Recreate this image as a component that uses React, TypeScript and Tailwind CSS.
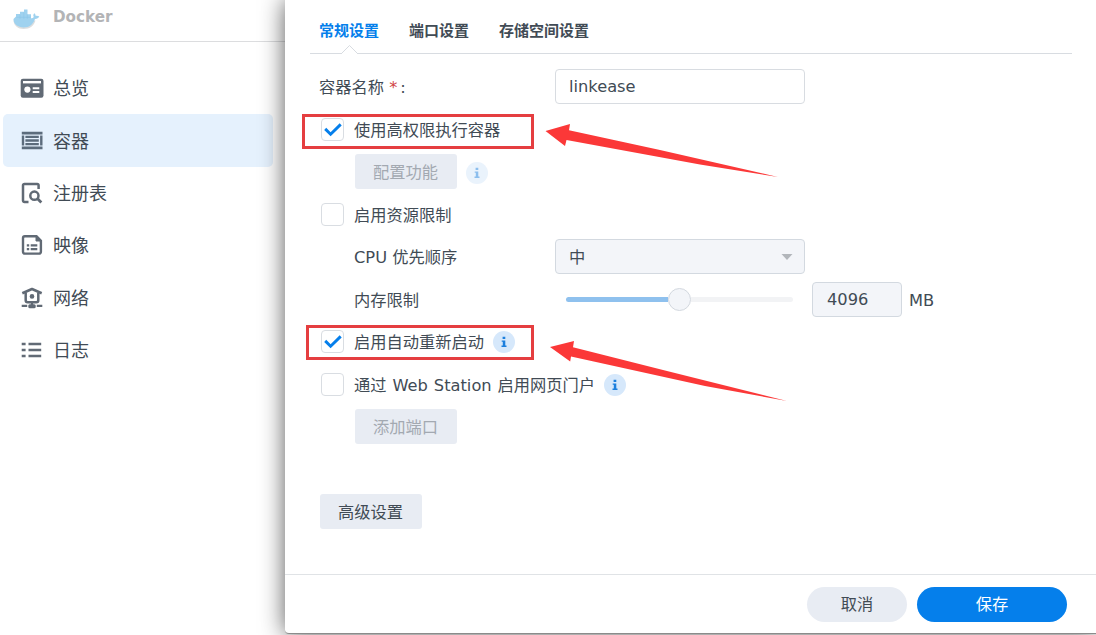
import React from 'react';

const Overview = () => (
  <svg width="24" height="22" viewBox="0 0 24 22" fill="none">
    <rect x="0.7" y="1.7" width="22.8" height="19" rx="2.2" fill="#616a75" />
    <rect x="3" y="4" width="18" height="2.4" fill="#fff" />
    <circle cx="7.4" cy="12.6" r="3.1" fill="#fff" />
    <path d="M12.7 11.2h6.6M12.7 15h6.6" stroke="#fff" strokeWidth="1.9" />
  </svg>
);

const Container = () => (
  <svg width="24" height="22" viewBox="0 0 24 22" fill="none" stroke="#5c6c7c">
    <path d="M1.8 3.2h20.7M1.8 17.8h20.7" strokeWidth="2.8" />
    <path d="M3 5.6v9.8M21.3 5.6v9.8" strokeWidth="2.4" />
    <path d="M5.4 6.8h13.4M5.4 10.5h13.4M5.400 14.200h13.400" strokeWidth="2.300" />
  </svg>
);

const Registry = () => (
  <svg width="24" height="22" viewBox="0 0 24 22" fill="none" stroke="#616a75" strokeWidth="2.5">
    <path d="M8.500 20H4.400A1.400 1.400 0 0 1 3 18.600V3.400A1.400 1.400 0 0 1 4.400 2h12.800a1.400 1.400 0 0 1 1.400 1.400V7" />
    <circle cx="14.400" cy="13.700" r="4.100" />
    <path d="m17.300 16.600 4 4" strokeWidth="2.800" />
  </svg>
);

const Image = () => (
  <svg width="24" height="22" viewBox="0 0 24 22" fill="none" stroke="#616a75">
    <path d="M16.500 2.300H4.800A1.800 1.800 0 0 0 3 4.100V17.800a1.800 1.800 0 0 0 1.800 1.800h14.300a1.800 1.800 0 0 0 1.800-1.800V6.800z" strokeWidth="2.400" />
    <path d="M16 2v5h5z" fill="#616a75" />
    <path d="M6.800 11.400h2.400M10.700 11.400h6.600M6.800 15.200h2.400M10.700 15.200h6.600" strokeWidth="2.200" />
  </svg>
);

const Network = () => (
  <svg width="24" height="22" viewBox="0 0 24 22" fill="none" stroke="#616a75">
    <path d="M2.300 6.200 12 2l9.700 4.200" strokeWidth="2.600" strokeLinejoin="round" />
    <path d="M5.700 5.800v7.400a2 2 0 0 0 2 2h8.600a2 2 0 0 0 2-2V5.800" strokeWidth="2.500" />
    <circle cx="12" cy="9.400" r="2.300" fill="#616a75" stroke="none" />
    <path d="M12 15v4M1.700 18.800h5.500M16.800 18.800h5.500" strokeWidth="2.200" />
    <rect x="8.300" y="17.300" width="7.400" height="4" rx="1.500" fill="#616a75" stroke="none" />
  </svg>
);

const Log = () => (
  <svg width="24" height="22" viewBox="0 0 24 22" fill="none" stroke="#616a75" strokeWidth="2.400">
    <path d="M1.700 5h3.900M8.500 5h12.700M1.700 11h3.900M8.500 11h12.700M1.700 17h3.900M8.500 17h12.700" />
  </svg>
);

const Whale = () => (
  <svg width="30" height="22" viewBox="0 0 30 22">
    <path d="M1.500 11.500c.500 5.500 4.500 8.500 10 8.500 6.500 0 10.500-3.500 12-8.500z" fill="#dcdedf" />
    <path d="M1.500 10 4 7.500V5h4V2.800h4V.6h3.500v4.600H19v4.100c1.300 0 2.300-.500 2.800-1.300-.800-1.200-.600-2.600.400-3.800 1 .700 1.500 1.600 1.500 2.700 1.200-.300 2.500-.100 3.600.600-.700 1.600-2.200 2.400-4.300 2.400-2 5.300-5.400 8.500-11.300 8.500-5.900 0-10-2.900-10.200-7.800z" fill="#9fd2ef" />
    <path d="M4.500 8.300h14M8 5.800v4M11.800 3.500v6.300M15.300 5.500v4.300" stroke="#8cc6e8" strokeWidth=".6" />
  </svg>
);

const navItems = [
  { label: '总览', icon: <Overview /> },
  { label: '容器', icon: <Container />, active: true },
  { label: '注册表', icon: <Registry /> },
  { label: '映像', icon: <Image /> },
  { label: '网络', icon: <Network /> },
  { label: '日志', icon: <Log /> },
];

function Checkbox({ checked = false }: { checked?: boolean }) {
  return (
    <span className="mb-px mr-[10px] flex h-[23px] w-[23px] shrink-0 items-center justify-center rounded-[4px] border border-[#d9dde2] bg-white">
      {checked && (
        <svg width="20" height="16" viewBox="0 0 20 16" fill="none">
          <path d="M2.200 6.900 7.600 12.200 17.700 2.400" stroke="#057feb" strokeWidth="2.900" />
        </svg>
      )}
    </span>
  );
}

function Info({ faded = false }: { faded?: boolean }) {
  return (
    <span className={faded ? 'opacity-50' : ''}>
      <svg width="22" height="22" viewBox="0 0 22 22">
        <circle cx="11" cy="11" r="11" fill="#d6e8fb" />
        <path d="M9.600 5.700h2.700v2.300H9.600zM8.700 9.400h3.600v5.200h1.200V16H8.500v-1.400h1.300v-3.800H8.700z" fill="#1c7fdd" />
      </svg>
    </span>
  );
}

function Button({ children, disabled = false }: { children: React.ReactNode; disabled?: boolean }) {
  return (
    <button
      disabled={disabled}
      className={`flex h-[35px] w-[102px] items-center justify-center rounded-[3px] bg-[#e8ecf3] pr-px pt-[2px] ${disabled ? 'text-[#a3a9b1]' : 'text-[#414b55]'}`}
    >
      {children}
    </button>
  );
}

export default function App() {
  return (
    <div className="relative flex h-[635px] w-[1096px] overflow-hidden bg-white font-['DejaVu_Sans','Noto_Sans_CJK_SC',sans-serif] text-[16.25px] leading-[24px] text-[#414b55]">
      <aside className="w-[285px] shrink-0">
        <header className="flex h-[42px] border-b border-[#dcdddf] pl-[12px]">
          <div className="pt-[9px]"><Whale /></div>
          <span className="ml-[11px] pt-[5px] text-[15.200px] font-bold text-[#b3b4b6]">Docker</span>
        </header>
        <nav className="flex flex-col pt-[20px]">
          {navItems.map((item) => (
            <a
              key={item.label}
              className={`ml-[3px] flex h-[52.400px] w-[270px] items-center rounded-[5px] pl-[17px] text-[18px] ${item.active ? 'bg-[#e5f1fd]' : ''}`}
            >
              {item.icon}
              <span className="ml-[9px] pt-[2px]">{item.label}</span>
            </a>
          ))}
        </nav>
      </aside>

      <main className="relative flex h-[634px] flex-1 flex-col rounded-bl-[4px] border-b border-[#8b8b8b] bg-white shadow-[0_0_24px_rgba(0,0,0,0.65)]">
        <div className="relative ml-[25px] mr-[24px] flex h-[54px] gap-[30px] border-b border-[#d8dce1] pl-[9px] pt-[19px] text-[15px] font-bold">
          <span className="text-[#057feb]">常规设置</span>
          <span>端口设置</span>
          <span>存储空间设置</span>
          <svg className="absolute left-[30px] top-[44px]" width="20" height="10" viewBox="0 0 20 10">
            <path d="M1 10 9.500 1.500 18 10" fill="#fff" stroke="#d8dce1" />
          </svg>
        </div>

        <section className="flex flex-1 flex-col pl-[35px] pt-[15px]">
          <div className="flex h-[35px] items-center">
            <label className="-ml-px w-[236px] pt-[2px]">容器名称 <span className="text-[#d14545]">*</span><span className="ml-[3px]">:</span></label>
            <div className="flex h-[35px] w-[250px] items-center rounded-[4px] border border-[#d8dce1] px-[13px] pt-px">linkease</div>
          </div>
          <label className="mt-[8px] flex h-[36px] items-center pl-px"><Checkbox checked /><span className="pt-[2px]">使用高权限执行容器</span></label>
          <div className="mt-[6px] flex items-center gap-[9px] pl-[35px]">
            <Button disabled>配置功能</Button>
            <span className="flex pt-[2px]"><Info faded /></span>
          </div>
          <label className="mt-[8px] flex h-[36px] items-center pl-px"><Checkbox /><span className="pt-[2px]">启用资源限制</span></label>
          <div className="mt-[6px] flex h-[35px] items-center pl-[35px]">
            <span className="-ml-px w-[201px] pt-[2px]">CPU 优先顺序</span>
            <div className="flex h-[35px] w-[250px] items-center justify-between rounded-[4px] border border-[#d3d9e0] bg-[#f3f5f9] pl-[13px] pr-[11px]">
              <span className="pt-[2px]">中</span>
              <svg width="12" height="6" viewBox="0 0 12 6"><path d="M.500 0h11L6 6z" fill="#b2b6bb" /></svg>
            </div>
          </div>
          <div className="mt-[8px] flex h-[35px] items-center pl-[35px]">
            <span className="-ml-px w-[212px] pt-[2px]">内存限制</span>
            <div className="flex w-[227px] items-center">
              <span className="h-[5px] w-[102px] rounded-l-full bg-[#8fc1ee]" />
              <span className="h-[23px] w-[23px] rounded-full border border-[#d3d8df] bg-[#f3f5f9]" />
              <span className="h-[5px] flex-1 rounded-r-full bg-[#f2f3f5]" />
            </div>
            <div className="ml-[19px] flex h-[35px] w-[90px] items-center rounded-[4px] border border-[#d3d9e0] bg-[#f3f5f9] pl-[14px] pt-px">4096</div>
            <span className="ml-[7px] pt-[2px]">MB</span>
          </div>
          <label className="mt-[7px] flex h-[36px] items-center pl-px"><Checkbox checked /><span className="pt-[2px]">启用自动重新启动</span><span className="ml-[9px] flex"><Info /></span></label>
          <label className="mt-[7px] flex h-[36px] items-center pl-px"><Checkbox /><span className="pt-[2px] [word-spacing:0.8px]">通过 Web Station 启用网页门户</span><span className="ml-[9px] flex"><Info /></span></label>
          <div className="mt-[6px] pl-[35px]"><Button disabled>添加端口</Button></div>
          <div className="mt-[50px]"><Button>高级设置</Button></div>
        </section>

        <footer className="flex h-[59px] items-start justify-end gap-[10px] border-t border-[#e0e3e6] pr-[29px] pt-[12px]">
          <button className="h-[35px] w-[100px] rounded-full bg-[#e8ecf3]">取消</button>
          <button className="h-[35px] w-[150px] rounded-full bg-[#057feb] text-white">保存</button>
        </footer>
      </main>

      <div className="pointer-events-none absolute left-[302px] top-[114px] h-[35px] w-[232px] border-3 border-[#e53e40]" />
      <div className="pointer-events-none absolute left-[306px] top-[325px] h-[35px] w-[228px] border-3 border-[#e53e40]" />
      <svg className="pointer-events-none absolute left-0 top-0" width="1096" height="635" viewBox="0 0 1096 635" fill="#fb3838">
        <path d="M545.500 131 570 124 569 130.200 660 150 778 177 700 164.500 566.500 140 565 146z" />
        <path d="M550 347 574 341 573 347.300 665 370.500 787 401 705 386 571 356.500 570.200 361.500z" />
      </svg>
    </div>
  );
}
